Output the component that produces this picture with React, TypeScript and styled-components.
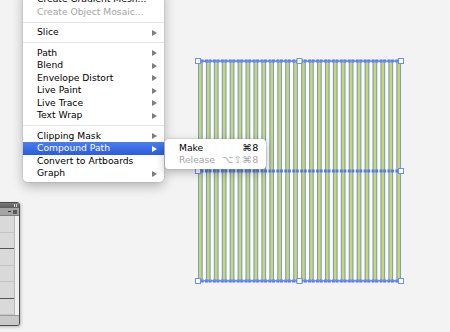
import React from 'react';
import styled, { createGlobalStyle } from 'styled-components';

const Global = createGlobalStyle`
  html, body { margin: 0; padding: 0; background: #f3f3f3; }
  body { font-family: "DejaVu Sans", "Liberation Sans", sans-serif; }
`;

const Stage = styled.div`
  position: relative;
  width: 450px;
  height: 332px;
  overflow: hidden;
  background: #f3f3f3;
`;

const Menu = styled.div`
  position: absolute;
  left: 23px;
  top: -11px;
  width: 141px;
  padding: 4.25px 0 2.25px;
  background: rgba(255, 255, 255, 0.98);
  border-radius: 0 0 5px 5px;
  box-shadow: 0 4px 12px rgba(0, 0, 0, 0.28), 0 0 0 1px rgba(0, 0, 0, 0.05);
  display: flex;
  flex-direction: column;
  z-index: 2;
`;

const Item = styled.div<{ $active?: boolean; $disabled?: boolean }>`
  height: 12.5px;
  display: flex;
  align-items: center;
  justify-content: space-between;
  padding: 0 7px 0 14px;
  font-size: 9.2px;
  line-height: 12.5px;
  white-space: nowrap;
  color: ${(p) => (p.$active ? '#ffffff' : p.$disabled ? '#a5a5a5' : '#000000')};
  background: ${(p) => (p.$active ? 'linear-gradient(#4d7eee, #2b5cdb)' : 'transparent')};
`;

const Sep = styled.div`
  height: 8px;
  display: flex;
  align-items: center;
  &::after {
    content: '';
    flex: 1;
    height: 1px;
    background: #e4e4e4;
  }
`;

const Arrow = styled.span<{ $active?: boolean }>`
  width: 0;
  height: 0;
  border-top: 3px solid transparent;
  border-bottom: 3px solid transparent;
  border-left: 5px solid ${(p) => (p.$active ? '#ffffff' : '#7d7d7d')};
`;

const SubMenu = styled.div`
  position: absolute;
  left: 165px;
  top: 139px;
  width: 101px;
  padding: 2.75px 0 2.25px;
  background: rgba(255, 255, 255, 0.98);
  border-radius: 4px;
  box-shadow: 0 3px 10px rgba(0, 0, 0, 0.28), 0 0 0 1px rgba(0, 0, 0, 0.05);
  display: flex;
  flex-direction: column;
  z-index: 3;
`;

const Shortcut = styled.span`
  font-size: 9.5px;
  letter-spacing: 0.6px;
`;

const Artwork = styled.svg`
  position: absolute;
  left: 0;
  top: 0;
  width: 450px;
  height: 332px;
  z-index: 1;
`;

const Panel = styled.div`
  position: absolute;
  left: -3px;
  top: 202px;
  width: 21px;
  height: 122px;
  border: 1px solid #4c4c4c;
  border-radius: 0 3px 3px 0;
  background: #d6d6d6;
  display: flex;
  flex-direction: column;
  overflow: hidden;
  box-shadow: 1px 1px 3px rgba(0, 0, 0, 0.25);
`;

const PanelHeader = styled.div`
  height: 7px;
  background: linear-gradient(#777, #5d5d5d);
  display: flex;
  justify-content: flex-end;
  align-items: center;
  padding-right: 2px;
  gap: 1px;
  & > i {
    width: 1px;
    height: 3px;
    background: #d0d0d0;
  }
`;

const PanelTabs = styled.div`
  height: 9px;
  background: #a4a4a4;
  border-bottom: 1px solid #808080;
  display: flex;
  justify-content: flex-end;
  align-items: center;
  padding-right: 2px;
  gap: 2px;
  & > b {
    width: 4px;
    height: 4px;
    background: #5a5a5a;
  }
  & > i {
    width: 3px;
    height: 1px;
    background: #333;
  }
`;

const PanelBody = styled.div`
  flex: 1;
  display: flex;
`;

const PanelList = styled.div`
  flex: 1;
  display: flex;
  flex-direction: column;
`;

const PanelRow = styled.div<{ $dark?: boolean }>`
  height: 15.5px;
  border-bottom: 1px solid ${(p) => (p.$dark ? '#555' : '#c4c4c4')};
  background: #d9d9d9;
`;

const Scroll = styled.div`
  width: 4px;
  background: #f0f0f0;
  border-left: 1px solid #bbb;
`;

const PanelFoot = styled.div`
  height: 11px;
  background: #c9c9c9;
  border-top: 1px solid #9a9a9a;
`;

const menuItems: Array<{ label?: string; sep?: boolean; arrow?: boolean; disabled?: boolean; active?: boolean }> = [
  { label: 'Create Gradient Mesh...' },
  { label: 'Create Object Mosaic...', disabled: true },
  { sep: true },
  { label: 'Slice', arrow: true },
  { sep: true },
  { label: 'Path', arrow: true },
  { label: 'Blend', arrow: true },
  { label: 'Envelope Distort', arrow: true },
  { label: 'Live Paint', arrow: true },
  { label: 'Live Trace', arrow: true },
  { label: 'Text Wrap', arrow: true },
  { sep: true },
  { label: 'Clipping Mask', arrow: true },
  { label: 'Compound Path', arrow: true, active: true },
  { label: 'Convert to Artboards' },
  { label: 'Graph', arrow: true },
];

function Bars() {
  const left = 198;
  const right = 401;
  const top = 61;
  const bottom = 281;
  const mid = 171;
  const n = 26;
  const w = 4.6;
  const pitch = (right - left - w) / (n - 1);
  const blue = '#7896f4';
  const bars = [];
  for (let i = 0; i < n; i++) {
    const x = left + i * pitch;
    bars.push(
      <g key={i}>
        <rect x={x} y={top} width={w} height={bottom - top} fill="#cadb5c" />
        <rect x={x} y={top} width={1} height={bottom - top} fill={blue} />
        <rect x={x + w - 1} y={top} width={1} height={bottom - top} fill={blue} />
        {[top, mid, bottom].map((yy) => (
          <g key={yy}>
            <rect x={x - 1} y={yy - 1.5} width={3} height={3} fill="#5479f0" />
            <rect x={x + w - 2} y={yy - 1.5} width={3} height={3} fill="#5479f0" />
          </g>
        ))}
      </g>
    );
  }
  const handles: Array<[number, number]> = [
    [left, top],
    [(left + right) / 2, top],
    [right, top],
    [left, mid],
    [right, mid],
    [left, bottom],
    [(left + right) / 2, bottom],
    [right, bottom],
  ];
  return (
    <Artwork viewBox="0 0 450 332">
      <rect x={left} y={top} width={right - left} height={bottom - top} fill="#fdfdff" />
      {bars}
      <rect x={left + 0.5} y={top + 0.5} width={right - left - 1} height={bottom - top - 1} fill="none" stroke={blue} strokeWidth={1} />
      <line x1={left} y1={top} x2={right} y2={top} stroke="#5b7ff2" strokeWidth={1} />
      <line x1={left} y1={bottom} x2={right} y2={bottom} stroke="#5b7ff2" strokeWidth={1} />
      {handles.map(([hx, hy], i) => (
        <rect key={i} x={hx - 2.5} y={hy - 2.5} width={5} height={5} fill="#ffffff" stroke="#6d8ef2" strokeWidth={1} />
      ))}
    </Artwork>
  );
}

export default function App() {
  return (
    <>
      <Global />
      <Stage>
        <Bars />
        <Panel>
          <PanelHeader>
            <i />
            <i />
          </PanelHeader>
          <PanelTabs>
            <i />
            <b />
          </PanelTabs>
          <PanelBody>
            <PanelList>
              <PanelRow />
              <PanelRow $dark />
              <PanelRow />
              <PanelRow />
              <PanelRow $dark />
              <PanelRow />
            </PanelList>
            <Scroll />
          </PanelBody>
          <PanelFoot />
        </Panel>
        <Menu>
          {menuItems.map((m, i) =>
            m.sep ? (
              <Sep key={i} />
            ) : (
              <Item key={i} $active={m.active} $disabled={m.disabled}>
                <span>{m.label}</span>
                {m.arrow && <Arrow $active={m.active} />}
              </Item>
            )
          )}
        </Menu>
        <SubMenu>
          <Item>
            <span>Make</span>
            <Shortcut>⌘8</Shortcut>
          </Item>
          <Item $disabled>
            <span>Release</span>
            <Shortcut>⌥⇧⌘8</Shortcut>
          </Item>
        </SubMenu>
      </Stage>
    </>
  );
}
